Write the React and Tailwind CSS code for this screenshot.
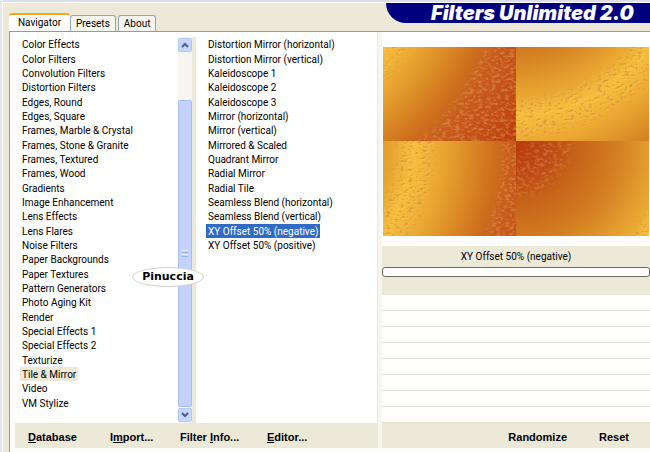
import React, { useState } from 'react';

// Filter categories
const categories = [
  'Color Effects', 'Color Filters', 'Convolution Filters', 'Distortion Filters',
  'Edges, Round', 'Edges, Square', 'Frames, Marble & Crystal', 'Frames, Stone & Granite',
  'Frames, Textured', 'Frames, Wood', 'Gradients', 'Image Enhancement',
  'Lens Effects', 'Lens Flares', 'Noise Filters', 'Paper Backgrounds',
  'Paper Textures', 'Pattern Generators', 'Photo Aging Kit', 'Render',
  'Special Effects 1', 'Special Effects 2', 'Texturize', 'Tile & Mirror',
  'Video', 'VM Stylize'
];

// Filters of the current category
const filters = [
  'Distortion Mirror (horizontal)', 'Distortion Mirror (vertical)',
  'Kaleidoscope 1', 'Kaleidoscope 2', 'Kaleidoscope 3',
  'Mirror (horizontal)', 'Mirror (vertical)', 'Mirrored & Scaled',
  'Quadrant Mirror', 'Radial Mirror', 'Radial Tile',
  'Seamless Blend (horizontal)', 'Seamless Blend (vertical)',
  'XY Offset 50% (negative)', 'XY Offset 50% (positive)'
];

// Main dialog
const App = () => {
  const [tab, setTab] = useState('Navigator');
  const [category, setCategory] = useState('Tile & Mirror');
  const [filter, setFilter] = useState('XY Offset 50% (negative)');

  return (
    <div className="flex min-h-screen bg-[#ece9d8] font-['Roboto','Liberation_Sans',sans-serif] text-[10px] leading-[14px] text-black">
      {/* Window edge */}
      <div className="w-[3px] shrink-0 border-r border-white bg-[#e4e6ee]" />

      <div className="flex min-w-0 flex-1 flex-col">
        <div className="h-[3px] border-b border-white bg-[#dcdee8]" />

        {/* Tabs and title */}
        <header className="flex h-7 items-end justify-between pl-[6px]">
          <nav className="flex items-end">
            <Tab name="Navigator" active={tab === 'Navigator'} onClick={setTab} />
            <Tab name="Presets" active={tab === 'Presets'} onClick={setTab} />
            <Tab name="About" active={tab === 'About'} onClick={setTab} />
          </nav>
          <h1 className="h-5 w-[264px] self-start rounded-bl-[24px] bg-[#00007f] pl-[45px] font-['Inter',sans-serif] text-[20px] leading-5 font-black whitespace-nowrap text-white italic">
            Filters Unlimited 2.0
          </h1>
        </header>

        <main className="ml-[6px] flex flex-1 border-t border-l border-[#919b9c] bg-[#fcfcfa] pb-1 pl-[5px]">
          {/* Lists */}
          <div className="flex w-[362px] shrink-0 flex-col bg-white">
            <div className="relative flex flex-1 pt-[5px]">
              <ul className="grid h-[373px] w-[163px] auto-rows-fr pl-[5px]">
                {categories.map((name) => (
                  <li key={name} className="flex">
                    <button
                      onClick={() => setCategory(name)}
                      className={`px-[2px] pt-px leading-[13px] whitespace-nowrap ${name === category ? 'bg-[#ece9d8]' : ''}`}
                    >
                      {name}
                    </button>
                  </li>
                ))}
              </ul>
              <ScrollBar />
              <div className="w-1 bg-[#ece9d8]" />
              <ul className="grid h-[373px] flex-1 grid-rows-[repeat(26,minmax(0,1fr))] pl-[10px]">
                {filters.map((name) => (
                  <li key={name} className="flex">
                    <button
                      onClick={() => setFilter(name)}
                      className={`px-[2px] pt-px leading-[13px] whitespace-nowrap ${name === filter ? 'bg-[#316ac5] text-white' : ''}`}
                    >
                      {name}
                    </button>
                  </li>
                ))}
              </ul>

              {/* Name badge */}
              <span className="absolute top-[235px] left-[117px] flex h-5 w-[72px] items-center justify-center rounded-[50%] border border-[#d0d0d0] bg-white font-['DejaVu_Sans',sans-serif] text-[11px] font-bold">
                Pinuccia
              </span>
            </div>
            <footer className="flex h-[25px] items-center bg-[#ece9d8] pt-[2px] pl-[13px] font-['Liberation_Sans',sans-serif] text-[11px] font-bold">
              <button className="w-[82px] text-left"><u>D</u>atabase</button>
              <button className="w-[70px] text-left">I<u>m</u>port...</button>
              <button className="w-[87px] text-left">Filter <u>I</u>nfo...</button>
              <button><u>E</u>ditor...</button>
            </footer>
          </div>

          <div className="w-[5px] shrink-0 border-l border-[#ece9d8] bg-[#f6f5ee]" />

          {/* Preview and parameters */}
          <section className="flex min-w-0 flex-1 flex-col bg-white">
            <div className="px-px pt-[15px] pb-[10px]">
              <Preview />
            </div>
            <div className="h-[49px] bg-[#ece9d8] pt-1">
              <p className="text-center">{filter}</p>
              <div className="mt-[3px] h-[10px] rounded-[3px] border border-[#686868] bg-white" />
            </div>
            <div className="grid flex-1 auto-rows-fr">
              {[1, 2, 3, 4, 5, 6, 7, 8].map((row) => (
                <div key={row} className="border-b border-[#e6e2cd]" />
              ))}
            </div>
            <footer className="flex h-[25px] items-center justify-end gap-8 bg-[#ece9d8] pt-[2px] pr-[21px] font-['Liberation_Sans',sans-serif] text-[11px] font-bold">
              <button>Randomize</button>
              <button>Reset</button>
            </footer>
          </section>
        </main>
      </div>
    </div>
  );
};

// One tab of the header
const Tab = ({ name, active, onClick }) => (
  <button
    onClick={() => onClick(name)}
    className={
      active
        ? 'h-[18px] w-[61px] rounded-t-[3px] border-t-2 border-[#f5a623] bg-[#fcfcfa]'
        : 'mr-[2px] h-4 rounded-t-[3px] border border-b-0 border-[#91a7b4] bg-[#f6f5ee] px-[5px]'
    }
  >
    {name}
  </button>
);

// Scroll bar of the category list
const ScrollBar = () => (
  <div className="flex w-[14px] flex-col bg-[#f6f5f1] py-px">
    <button aria-label="Scroll up" className="flex h-[14px] items-center justify-center rounded-[2px] border border-[#b4c8f6] bg-[#c6d6fc]">
      <svg width="8" height="6" viewBox="0 0 8 6" fill="none" stroke="#4d6185" strokeWidth="2"><path d="M1 5 4 2 7 5" /></svg>
    </button>
    <div className="mt-12 flex flex-1 flex-col items-center justify-center gap-px rounded-[2px] border border-[#a8bff5] bg-[#c3d3fd]">
      <i className="h-px w-[6px] bg-[#eef4fe]" />
      <i className="h-px w-[6px] bg-[#8cb0f8]" />
      <i className="h-px w-[6px] bg-[#eef4fe]" />
      <i className="h-px w-[6px] bg-[#8cb0f8]" />
    </div>
    <button aria-label="Scroll down" className="mt-px flex h-[14px] items-center justify-center rounded-[2px] border border-[#b4c8f6] bg-[#c6d6fc]">
      <svg width="8" height="6" viewBox="0 0 8 6" fill="none" stroke="#4d6185" strokeWidth="2"><path d="M1 1 4 4 7 1" /></svg>
    </button>
  </div>
);

// Sample image with its quadrants swapped
const Preview = () => (
  <svg viewBox="0 0 266 189" className="block w-full">
    <defs>
      <radialGradient id="rings" gradientUnits="userSpaceOnUse" cx="0" cy="0" r="340">
        <stop offset="0" stopColor="#b8380c" />
        <stop offset="0.12" stopColor="#c04c14" />
        <stop offset="0.18" stopColor="#c66218" />
        <stop offset="0.3" stopColor="#d37f22" />
        <stop offset="0.42" stopColor="#e8a631" />
        <stop offset="0.48" stopColor="#f6be3c" />
        <stop offset="0.54" stopColor="#efae35" />
        <stop offset="0.6" stopColor="#e39b2c" />
        <stop offset="0.72" stopColor="#ce6f1c" />
        <stop offset="0.77" stopColor="#c95c1c" />
        <stop offset="0.88" stopColor="#c34b14" />
        <stop offset="1" stopColor="#b5320a" />
      </radialGradient>
      <radialGradient id="bands" gradientUnits="userSpaceOnUse" cx="0" cy="0" r="340">
        <stop offset="0" stopColor="#333" />
        <stop offset="0.09" stopColor="#ccc" />
        <stop offset="0.15" stopColor="#ccc" />
        <stop offset="0.18" stopColor="#000" />
        <stop offset="0.42" stopColor="#000" />
        <stop offset="0.45" stopColor="#ddd" />
        <stop offset="0.53" stopColor="#ddd" />
        <stop offset="0.56" stopColor="#000" />
        <stop offset="0.73" stopColor="#000" />
        <stop offset="0.76" stopColor="#fff" />
        <stop offset="1" stopColor="#fff" />
      </radialGradient>
      <mask id="rough" maskUnits="userSpaceOnUse" x="0" y="0" width="266" height="189">
        <rect width="266" height="189" fill="url(#bands)" />
      </mask>
      <filter id="dark" x="0" y="0" width="1" height="1">
        <feTurbulence type="fractalNoise" baseFrequency="0.22 0.36" numOctaves="4" seed="4" />
        <feColorMatrix values="0 0 0 0 0.5  0 0 0 0 0.16  0 0 0 0 0.02  5 0 0 0 -2.7" />
      </filter>
      <filter id="light" x="0" y="0" width="1" height="1">
        <feTurbulence type="fractalNoise" baseFrequency="0.22 0.36" numOctaves="4" seed="4" />
        <feOffset dx="1" dy="1" />
        <feColorMatrix values="0 0 0 0 1  0 0 0 0 0.68  0 0 0 0 0.3  4 0 0 0 -1.9" />
      </filter>
      <g id="sample">
        <rect width="266" height="189" fill="url(#rings)" />
        <g mask="url(#rough)">
          <rect width="266" height="189" filter="url(#light)" opacity="0.3" />
          <rect width="266" height="189" filter="url(#dark)" opacity="0.45" />
        </g>
      </g>
    </defs>
    <svg width="133" height="94" viewBox="133 95 133 94"><use href="#sample" /></svg>
    <svg x="133" width="133" height="94" viewBox="0 95 133 94"><use href="#sample" /></svg>
    <svg y="94" width="133" height="95" viewBox="133 0 133 95"><use href="#sample" /></svg>
    <svg x="133" y="94" width="133" height="95" viewBox="0 0 133 95"><use href="#sample" /></svg>
  </svg>
);

export default App;
